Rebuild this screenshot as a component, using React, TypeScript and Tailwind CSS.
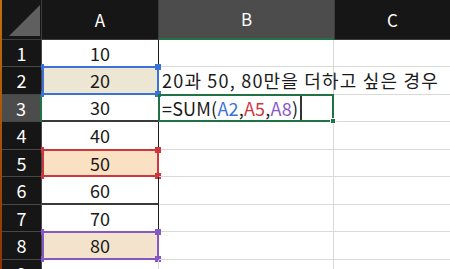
import React from 'react';

const rowHeights = [27, 28, 27, 28, 27, 28, 27, 28, 27];
const values = ['10', '20', '30', '40', '50', '60', '70', '80', ''];

type Mark = { color: string; fill: string };
const marks: Record<number, Mark> = {
  2: { color: '#3a72d6', fill: '#ece6d2' },
  5: { color: '#d0373d', fill: '#fae1c4' },
  8: { color: '#8757c6', fill: '#f3e3cc' },
};

const font = { fontFamily: '"Noto Sans CJK KR", "Noto Sans", sans-serif' };

const Handle: React.FC<{ className: string; color: string }> = ({ className, color }) => (
  <div className={`absolute w-[6px] h-[6px] ${className}`} style={{ backgroundColor: color }} />
);

const App: React.FC = () => {
  return (
    <div className="flex w-[450px] h-[269px] overflow-hidden bg-white" style={font}>
      <div className="w-[2px] h-full bg-gradient-to-b from-[#c0700f] to-[#8c3408]" />
      <div className="grid grid-cols-[40px_117px_175px_116px] grid-rows-[40px_27px_28px_27px_28px_27px_28px_27px_28px_27px]">
        {/* header row */}
        <div className="relative bg-[#161616] border-r border-b border-[#3d3d3d]">
          <div className="absolute left-[7px] top-[5px] w-[31px] h-[31px] bg-[#5f5f5f] [clip-path:polygon(100%_0,100%_100%,0_100%)]" />
        </div>
        <div className="flex items-center justify-center bg-[#161616] border-r border-b border-[#3d3d3d] text-white text-[17px]">A</div>
        <div className="flex items-center justify-center bg-[#4c4c4c] border-b-2 border-[#217346] text-white text-[17px]">B</div>
        <div className="flex items-center justify-center bg-[#161616] border-l border-b border-[#3d3d3d] text-white text-[17px]">C</div>

        {rowHeights.map((_, i) => {
          const r = i + 1;
          const mark = marks[r];
          const active = r === 3;
          const darkBottom = r === 3 || r === 6;
          return (
            <React.Fragment key={r}>
              <div
                className={`flex items-center justify-center text-white text-[18px] border-b border-[#474747] ${
                  active ? 'bg-[#4c4c4c] border-r-2 border-r-[#217346]' : 'bg-[#161616] border-r border-r-[#474747]'
                }`}
              >
                {r}
              </div>
              <div
                className={`relative flex items-center justify-center text-[18px] text-[#1a1a1a] ${
                  r <= 8 ? 'border-r border-r-[#1c1c1c]' : 'border-r border-r-[#d9d9d9]'
                } ${darkBottom ? 'border-b-2 border-b-[#3a3a3a]' : 'border-b border-b-[#d9d9d9]'}`}
                style={mark ? { backgroundColor: mark.fill } : undefined}
              >
                {values[i]}
                {mark && (
                  <>
                    <div className="absolute -top-[1px] -bottom-[1px] left-0 -right-[1px] border-2" style={{ borderColor: mark.color }} />
                    <Handle className="-left-[1px] -top-[3px] !w-[3px]" color={mark.color} />
                    <Handle className="-left-[1px] -bottom-[3px] !w-[3px]" color={mark.color} />
                    <Handle className="-right-[3px] -top-[3px]" color={mark.color} />
                    <Handle className="-right-[3px] -bottom-[3px]" color={mark.color} />
                  </>
                )}
              </div>
              <div className="relative flex items-center border-r border-b border-[#d9d9d9] text-[18px] text-[#1a1a1a] whitespace-nowrap">
                {r === 2 && (
                  <span className="absolute left-[3px] z-10 tracking-[1.2px]">20과 50, 80만을 더하고 싶은 경우</span>
                )}
                {r === 3 && (
                  <>
                    <div className="absolute -top-[1px] -bottom-[1px] -left-[1px] -right-[1px] border-2 border-[#217346] z-10" />
                    <div className="absolute -right-[3px] -bottom-[3px] w-[6px] h-[6px] bg-[#217346] border border-white z-10" />
                    <span className="pl-[3px] flex items-center tracking-[0.2px]">
                      =SUM(<span className="text-[#3a72d6]">A2</span>,<span className="text-[#d0373d]">A5</span>,<span className="text-[#8757c6]">A8</span>)
                      <span className="ml-[2px] w-[2px] h-[24px] bg-[#333]" />
                    </span>
                  </>
                )}
              </div>
              <div className="border-b border-[#d9d9d9]" />
            </React.Fragment>
          );
        })}
      </div>
    </div>
  );
};

export default App;
